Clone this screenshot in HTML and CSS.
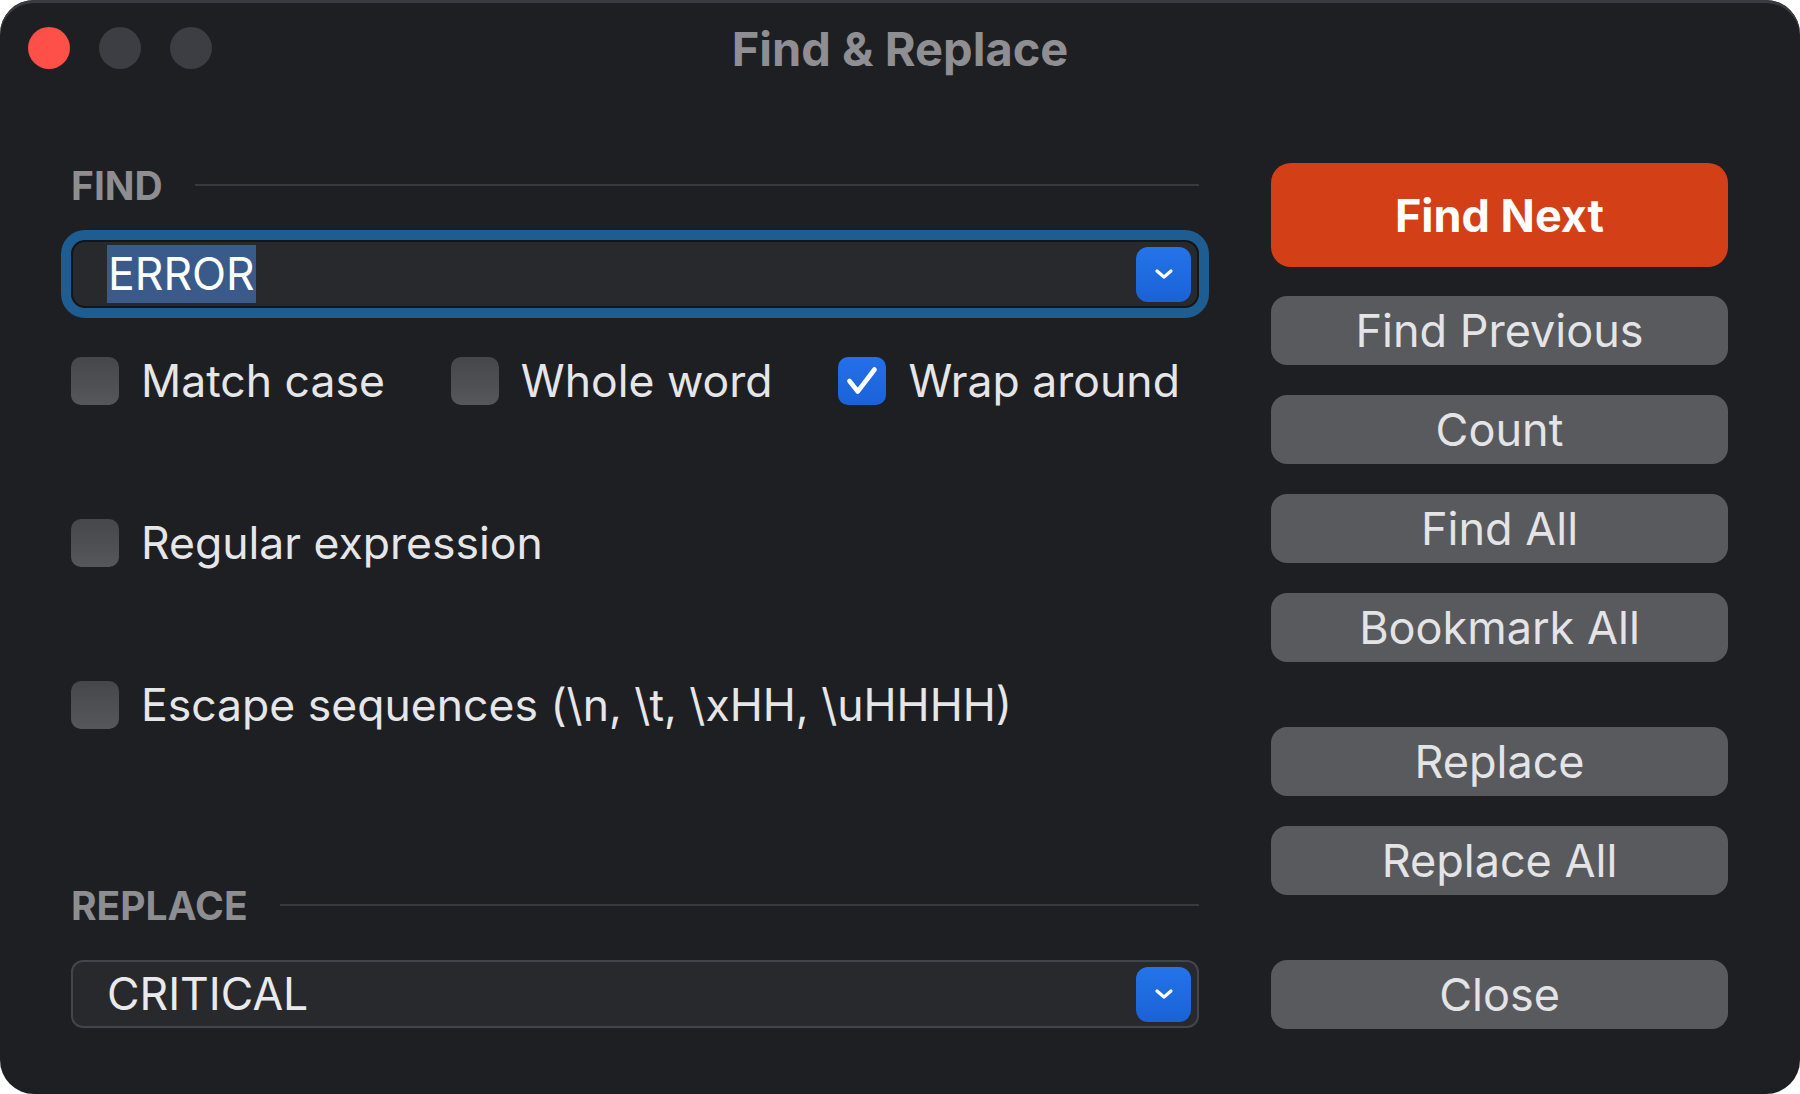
FILE: index.html
```html
<!DOCTYPE html>
<html lang="en">
<head>
    <meta charset="UTF-8">
    <meta name="viewport" content="width=device-width, initial-scale=1.0">
    <title>Find &amp; Replace</title>
    <link rel="stylesheet" href="styles.css">
</head>
<body>
    <div class="window">
        <div class="titlebar">
            <div class="lights">
                <span class="light light-close"></span>
                <span class="light"></span>
                <span class="light"></span>
            </div>
            <div class="title">Find &amp; Replace</div>
            <div></div>
        </div>

        <div class="content">
            <div class="fields">
                <div class="section-label">
                    <span>FIND</span>
                    <div class="rule"></div>
                </div>
                <div class="combo focused">
                    <span class="value"><span class="selected">ERROR</span></span>
                    <span class="drop">
                        <svg width="22" height="14" viewBox="0 0 22 14"><path d="M4 4 L11 10 L18 4" fill="none" stroke="#fff" stroke-width="3.2" stroke-linecap="round" stroke-linejoin="round"/></svg>
                    </span>
                </div>

                <div class="option-row first">
                    <label class="option">
                        <span class="checkbox"></span>
                        <span>Match case</span>
                    </label>
                    <label class="option">
                        <span class="checkbox"></span>
                        <span>Whole word</span>
                    </label>
                    <label class="option">
                        <span class="checkbox checked">
                            <svg width="48" height="48" viewBox="0 0 46 46"><path d="M11 23 L19 33 L35 12" fill="none" stroke="#fff" stroke-width="4.5" stroke-linecap="round" stroke-linejoin="round"/></svg>
                        </span>
                        <span>Wrap around</span>
                    </label>
                </div>
                <div class="option-row">
                    <label class="option">
                        <span class="checkbox"></span>
                        <span>Regular expression</span>
                    </label>
                </div>
                <div class="option-row">
                    <label class="option">
                        <span class="checkbox"></span>
                        <span>Escape sequences (\n, \t, \xHH, \uHHHH)</span>
                    </label>
                </div>

                <div class="section-label replace-label">
                    <span>REPLACE</span>
                    <div class="rule"></div>
                </div>
                <div class="combo">
                    <span class="value">CRITICAL</span>
                    <span class="drop">
                        <svg width="22" height="14" viewBox="0 0 22 14"><path d="M4 4 L11 10 L18 4" fill="none" stroke="#fff" stroke-width="3.2" stroke-linecap="round" stroke-linejoin="round"/></svg>
                    </span>
                </div>
            </div>

            <div class="actions">
                <button class="btn btn-primary" type="button">Find Next</button>
                <button class="btn" type="button">Find Previous</button>
                <button class="btn" type="button">Count</button>
                <button class="btn" type="button">Find All</button>
                <button class="btn" type="button">Bookmark All</button>
                <button class="btn spaced" type="button">Replace</button>
                <button class="btn" type="button">Replace All</button>
                <button class="btn spaced" type="button">Close</button>
            </div>
        </div>
    </div>
</body>
</html>
```

FILE: styles.css
```css
body {
    margin: 0;
    padding: 0;
    background-color: white;
    font-family: Inter, "Liberation Sans", Arial, sans-serif;
}
.window {
    width: 1800px;
    height: 1094px;
    box-sizing: border-box;
    background-color: rgb(30, 31, 35);
    border-radius: 34px;
    box-shadow: inset 0 3px 0 rgb(58, 59, 64);
    overflow: hidden;
}
.titlebar {
    height: 96px;
    display: grid;
    grid-template-columns: 1fr auto 1fr;
    align-items: center;
}
.lights {
    display: flex;
    gap: 29px;
    padding-left: 28px;
}
.light {
    width: 42px;
    height: 42px;
    border-radius: 50%;
    background-color: rgb(61, 62, 67);
}
.light-close {
    background-color: rgb(254, 80, 72);
}
.title {
    color: rgb(142, 142, 147);
    font-size: 47px;
    font-weight: 700;
}
.content {
    display: flex;
    gap: 72px;
    padding: 67px 72px 0 71px;
}
.fields {
    width: 1128px;
    display: flex;
    flex-direction: column;
}
.section-label {
    height: 44px;
    display: flex;
    align-items: center;
    gap: 32px;
    color: rgb(141, 141, 146);
    font-size: 39px;
    font-weight: 700;
}
.rule {
    flex: 1;
    height: 2px;
    background-color: rgb(56, 57, 62);
}
.combo {
    height: 68px;
    box-sizing: border-box;
    margin-top: 33px;
    display: flex;
    align-items: center;
    justify-content: space-between;
    padding: 0 6px 0 34px;
    background-color: rgb(40, 41, 45);
    border: 2px solid rgb(68, 69, 74);
    border-radius: 12px;
    color: rgb(234, 234, 236);
    font-size: 44.5px;
}
.combo.focused {
    border-color: rgb(20, 21, 24);
    border-radius: 14px;
    box-shadow: 0 0 0 10px rgb(29, 93, 145);
}
.selected {
    background-color: rgb(58, 91, 137);
    color: white;
    padding: 2px 1px;
}
.drop {
    width: 55px;
    height: 55px;
    border-radius: 12px;
    background: linear-gradient(rgb(36, 116, 234), rgb(26, 98, 214));
    display: flex;
    align-items: center;
    justify-content: center;
}
.option-row {
    height: 56px;
    margin-top: 106px;
    display: flex;
    align-items: center;
    gap: 66px;
}
.option-row.first {
    margin-top: 45px;
}
.option {
    display: flex;
    align-items: center;
    gap: 22px;
    color: rgb(230, 230, 232);
    font-size: 44.5px;
}
.checkbox {
    width: 48px;
    height: 48px;
    border-radius: 10px;
    background: linear-gradient(rgb(70, 71, 75), rgb(86, 87, 91));
    display: flex;
    align-items: center;
    justify-content: center;
}
.checkbox.checked {
    background: linear-gradient(rgb(36, 112, 232), rgb(27, 98, 218));
}
.replace-label {
    margin-top: 150px;
}
.actions {
    width: 457px;
    display: flex;
    flex-direction: column;
}
.btn {
    height: 69px;
    margin-top: 30px;
    border: none;
    border-radius: 16px;
    background-color: rgb(89, 90, 94);
    color: rgb(228, 228, 230);
    font-family: inherit;
    font-size: 45px;
    padding: 0;
}
.btn.spaced {
    margin-top: 65px;
}
.btn-primary {
    height: 104px;
    margin-top: 0;
    margin-bottom: -1px;
    border-radius: 20px;
    background-color: rgb(211, 64, 24);
    color: white;
    font-weight: 700;
}
```
